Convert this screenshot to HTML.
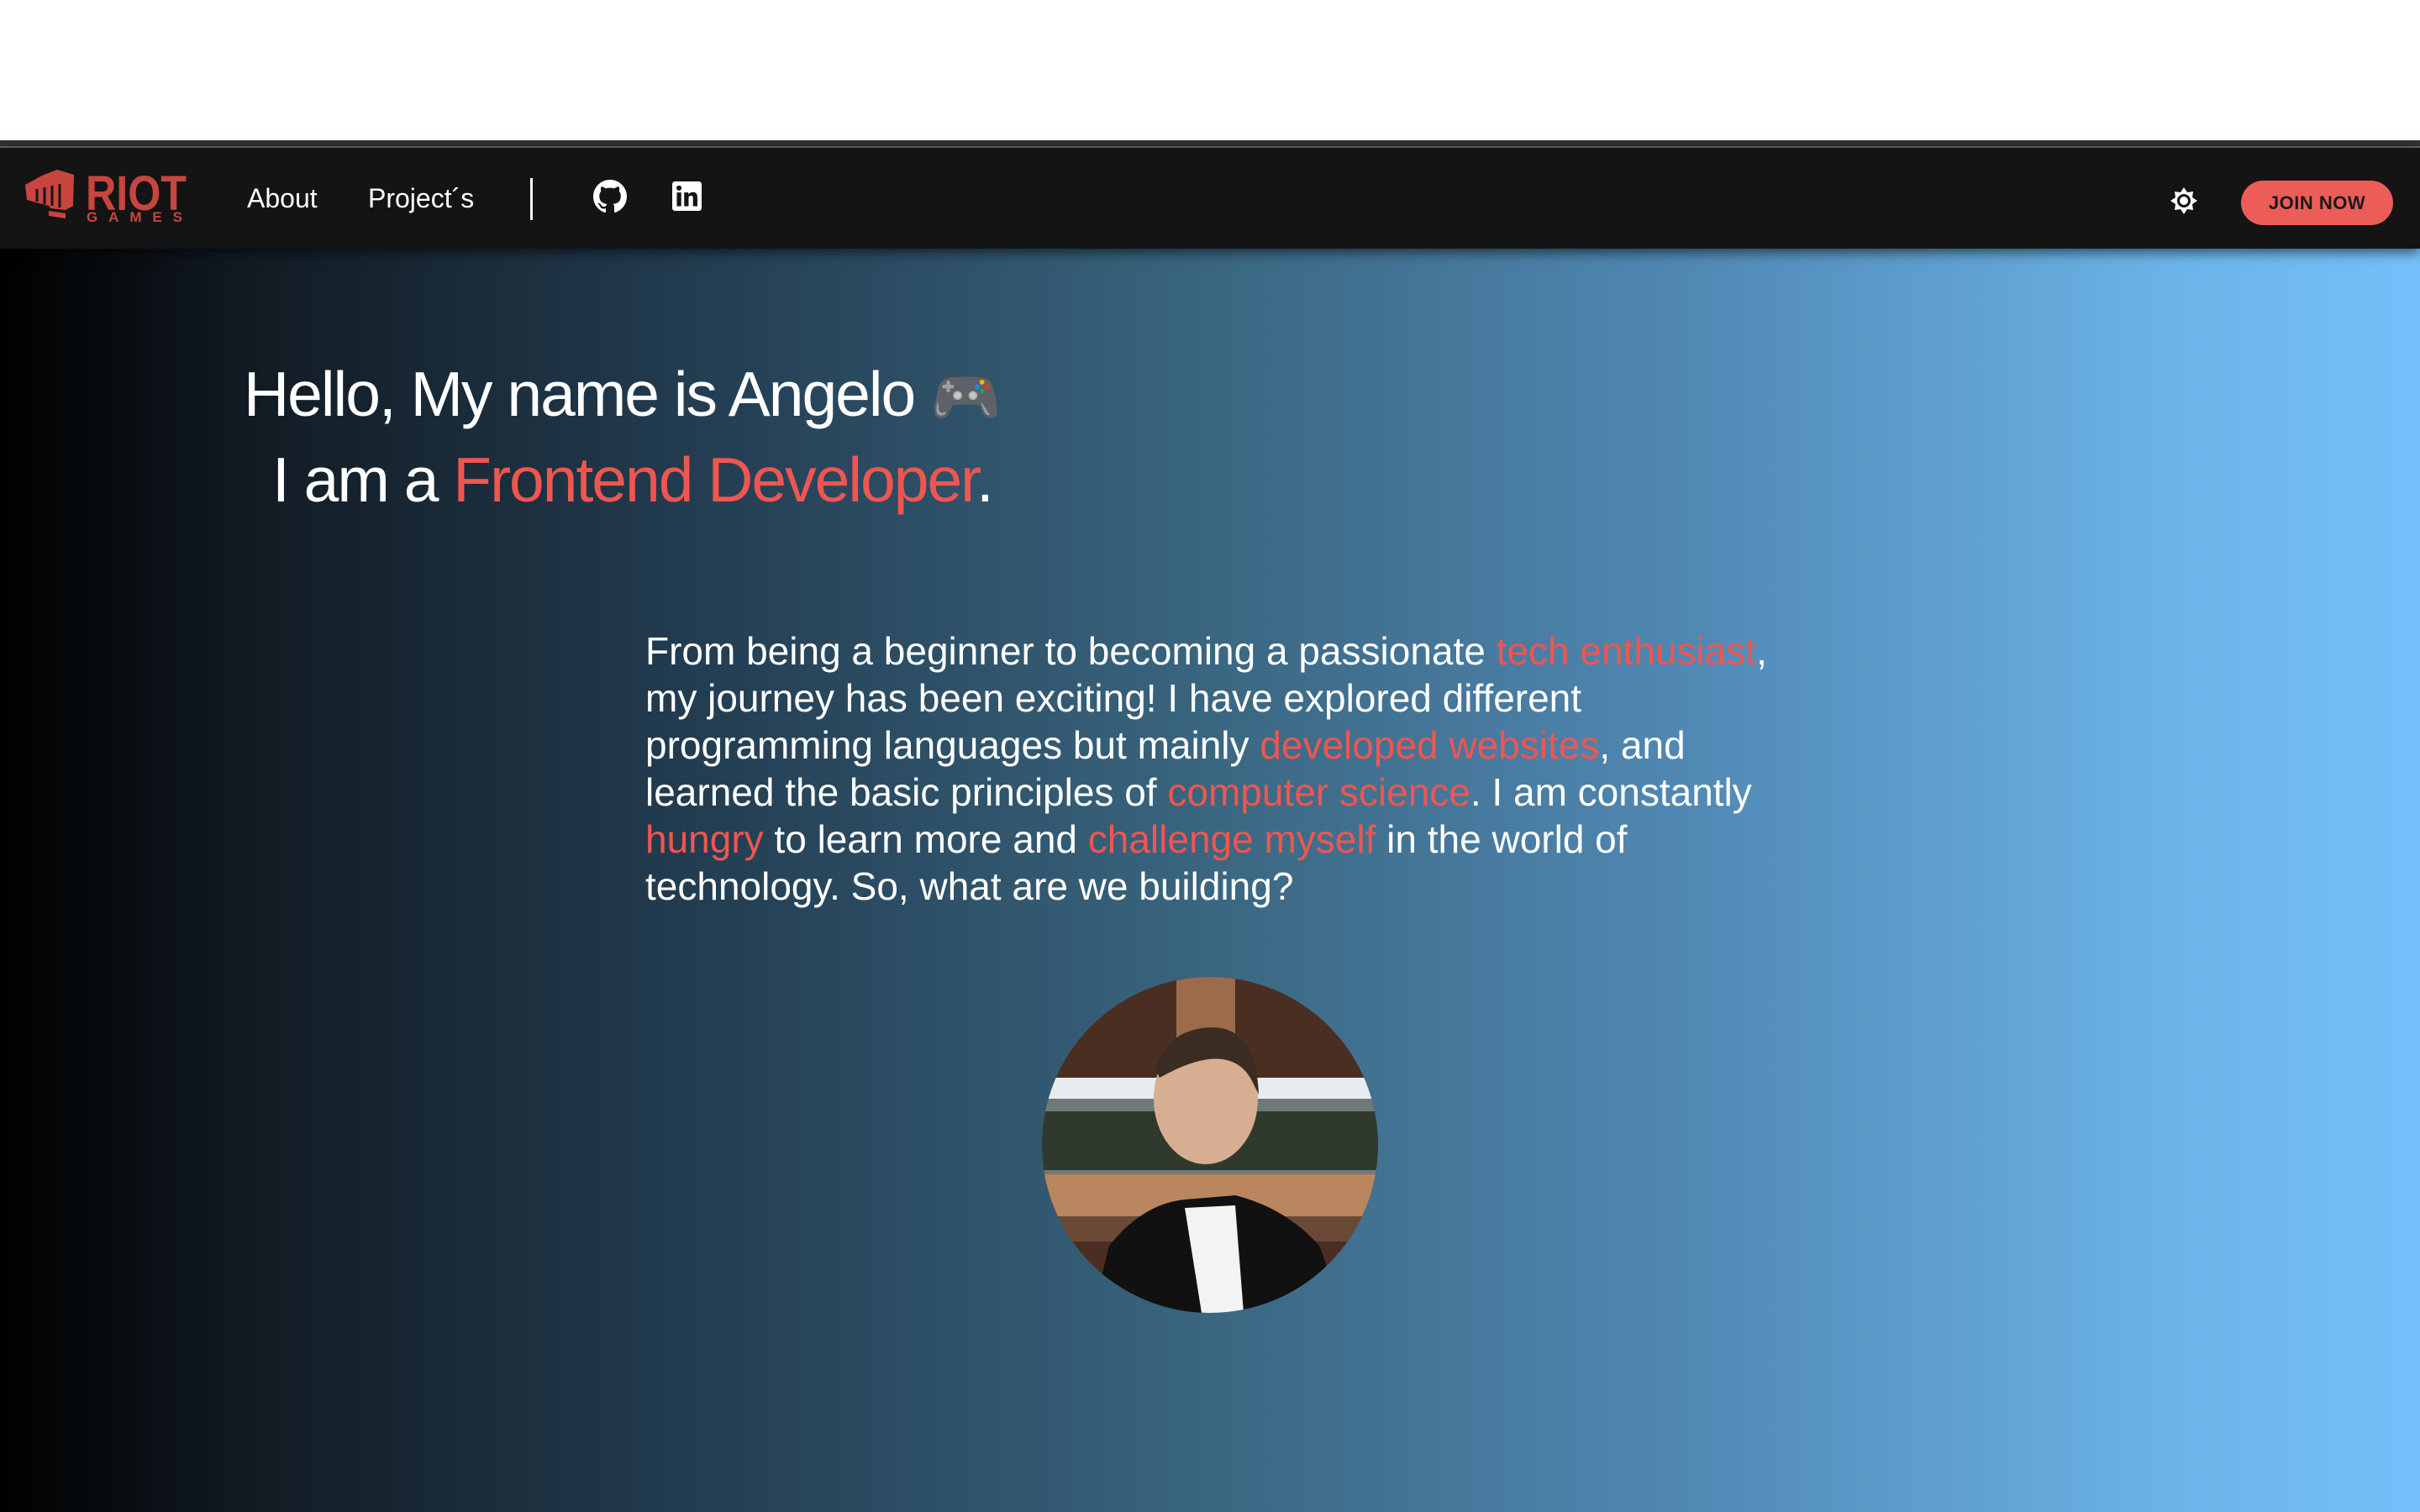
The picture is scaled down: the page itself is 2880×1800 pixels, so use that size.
<!DOCTYPE html>
<html><head><meta charset="utf-8">
<style>
*{margin:0;padding:0;box-sizing:border-box}
html,body{width:2880px;height:1800px;overflow:hidden;background:#fff;font-family:"Liberation Sans",Arial,sans-serif}
.topband{position:absolute;left:0;top:167px;width:2880px;height:9px;background:#333;border-bottom:2px solid #666}
.nav{position:absolute;left:0;top:176px;width:2880px;height:120px;background:#141414;z-index:2;box-shadow:0 4px 14px rgba(0,0,0,.6)}
.main{position:absolute;left:0;top:296px;width:2880px;height:1504px;background:linear-gradient(to right,#000 0%,#111a22 10%,#243f54 30%,#3a6680 50%,#5189b5 70%,#6cb4e8 90%,#74c0fa 100%)}
.navtxt{position:absolute;color:#fff;font-size:32px;top:42px}
.btn{position:absolute;left:2667px;top:39px;width:181px;height:53px;border-radius:27px;background:#ec5d58;color:#1a1a1a;font-weight:bold;font-size:22px;text-align:center;line-height:53px;letter-spacing:.5px}
h1{position:absolute;color:#fff;font-weight:300;font-size:75px;letter-spacing:-2px;white-space:nowrap}
.r{color:#ef5650}
.p{position:absolute;left:768px;color:#fff;font-size:46px;letter-spacing:0px;white-space:nowrap}
</style></head><body>
<div class="topband"></div>
<div class="nav">
<svg style="position:absolute;left:20px;top:19px" width="210" height="75" viewBox="0 0 210 75">
<g fill="#c8453f">
<polygon points="10,25 30,14 48,7 68,13 67,50 58,55 40,53 38,50 12,43"/>
<polygon points="38,56 58,59 58,65 38,62"/>
</g>
<g stroke="#141414" stroke-width="3">
<line x1="24" y1="30" x2="24" y2="45"/><line x1="33" y1="28" x2="33" y2="48"/><line x1="42" y1="26" x2="42" y2="50"/><line x1="51" y1="24" x2="51" y2="52"/>
</g>
<text x="82" y="55" font-family="Liberation Sans" font-weight="bold" font-size="58" fill="#c8453f" textLength="120" lengthAdjust="spacingAndGlyphs">RIOT</text>
<text x="83" y="69" font-family="Liberation Sans" font-weight="bold" font-size="17" fill="#c8453f" textLength="114" lengthAdjust="spacing">GAMES</text>
</svg>
<div class="navtxt" style="left:294px">About</div>
<div class="navtxt" style="left:438px">Project´s</div>
<div style="position:absolute;left:631px;top:36px;width:3px;height:50px;background:#fff"></div>
<svg style="position:absolute;left:706px;top:38px" width="40" height="40" viewBox="0 0 16 16"><path fill="#fff" d="M8 0C3.580 0 0 3.58 0 8c0 3.54 2.29 6.53 5.47 7.59.4.07.55-.17.55-.38 0-.19-.01-.82-.01-1.490-2.01.37-2.53-.49-2.69-.94-.09-.23-.48-.94-.82-1.13-.28-.15-.68-.52-.01-.53.63-.01 1.08.58 1.23.82.72 1.21 1.87.87 2.33.66.07-.52.28-.87.51-1.07-1.78-.2-3.64-.89-3.64-3.95 0-.87.31-1.59.82-2.15-.08-.2-.36-1.02.08-2.12 0 0 .67-.21 2.2.82.64-.18 1.32-.27 2-.27.68 0 1.36.09 2 .27 1.53-1.04 2.2-.82 2.2-.82.44 1.1.16 1.92.08 2.12.51.56.82 1.27.82 2.15 0 3.07-1.87 3.75-3.65 3.95.29.25.54.73.54 1.48 0 1.07-.01 1.93-.01 2.2 0 .21.15.46.55.38A8.013 8.013 0 0016 8c0-4.42-3.58-8-8-8z"/></svg>
<svg style="position:absolute;left:800px;top:40px" width="35" height="35" viewBox="0 0 16 16"><rect width="16" height="16" rx="1.5" fill="#fff"/><rect x="2.5" y="6" width="2.4" height="7.5" fill="#141414"/><circle cx="3.7" cy="3.6" r="1.4" fill="#141414"/><path d="M6.5 6h2.3v1.1c.4-.7 1.3-1.3 2.5-1.3 2 0 2.4 1.3 2.4 3v4.7h-2.4V9.4c0-1-.1-1.7-1.1-1.7s-1.3.7-1.3 1.6v4.2H6.5z" fill="#141414"/></svg>
<svg style="position:absolute;left:2582px;top:46px" width="34" height="34" viewBox="0 0 34 34"><polygon fill="#fff" points="17,1 21,7 28,6 27,13 33,17 27,21 28,28 21,27 17,33 13,27 6,28 7,21 1,17 7,13 6,6 13,7"/><circle cx="17" cy="17" r="6.5" fill="none" stroke="#141414" stroke-width="3"/></svg>
<div class="btn">JOIN NOW</div>
</div>
<div class="main">
<h1 style="left:290px;top:130px">Hello, My name is Angelo <span style="font-family:'Noto Color Emoji','DejaVu Sans',sans-serif;font-size:68px">🎮</span></h1>
<h1 style="left:324px;top:232px">I am a <span class="r">Frontend Developer</span>.</h1>
<div class="p" style="top:452px">From being a beginner to becoming a passionate <span class="r">tech enthusiast</span>,</div>
<div class="p" style="top:508px">my journey has been exciting! I have explored different</div>
<div class="p" style="top:564px">programming languages but mainly <span class="r">developed websites</span>, and</div>
<div class="p" style="top:620px">learned the basic principles of <span class="r">computer science</span>. I am constantly</div>
<div class="p" style="top:676px"><span class="r">hungry</span> to learn more and <span class="r">challenge myself</span> in the world of</div>
<div class="p" style="top:732px">technology. So, what are we building?</div>
<svg style="position:absolute;left:1240px;top:867px" width="400" height="400" viewBox="0 0 400 400">
<defs><clipPath id="c"><circle cx="200" cy="200" r="200"/></clipPath></defs>
<g clip-path="url(#c)">
<rect width="400" height="400" fill="#4a2e22"/>
<rect x="160" y="0" width="70" height="240" fill="#9b6b4b"/>
<rect x="0" y="120" width="400" height="125" fill="#6f7a78"/>
<rect x="0" y="120" width="400" height="25" fill="#e6ecef"/>
<rect x="0" y="160" width="400" height="70" fill="#2f3a2c"/>
<rect x="0" y="235" width="400" height="50" fill="#b98660"/>
<rect x="0" y="285" width="400" height="30" fill="#6a4a36"/>
<ellipse cx="195" cy="145" rx="62" ry="78" fill="#d8ae92"/>
<path d="M135 110 Q150 60 205 60 Q255 62 258 140 L248 120 Q220 75 140 120Z" fill="#3a2c22"/>
<path d="M60 400 L80 320 Q120 270 170 265 L230 260 Q290 275 330 320 L360 400Z" fill="#111"/>
<path d="M170 275 L230 272 L240 400 L190 400Z" fill="#f3f3f3"/>
</g></svg>
</div>
</body></html>
